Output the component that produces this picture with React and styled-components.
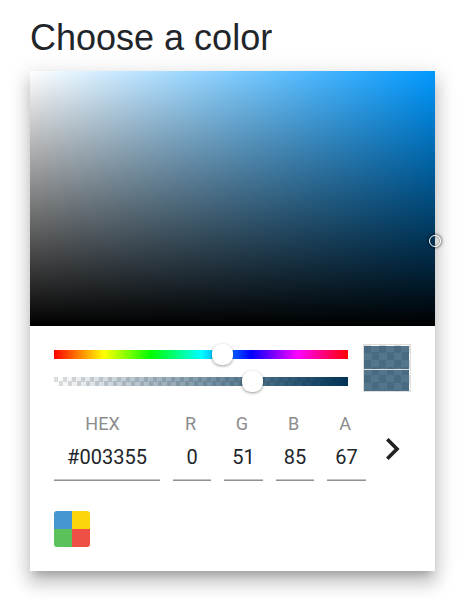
import React, { useState } from "react";
import styled, { createGlobalStyle, css } from "styled-components";

const GlobalStyle = createGlobalStyle`
  * { box-sizing: border-box; }
  body { margin: 0; background: #fff; color: #212529; overflow-x: hidden; }
  button, input { font: inherit; color: inherit; margin: 0; padding: 0; border: 0; border-radius: 0; background: none; }
`;

const Page = styled.main`
  padding: 16px 33px 32px 30px;
  font-family: Roboto, "Liberation Sans", sans-serif;
`;

const Title = styled.h1`
  margin: 0 0 11px;
  font: 400 36px/44px "Liberation Sans", Arial, sans-serif;
`;

const Card = styled.section`
  background: #fff;
  box-shadow:
    0 8px 8px -5px rgba(0, 0, 0, 0.2),
    0 12px 15px 2px rgba(0, 0, 0, 0.14),
    0 5px 21px 3px rgba(0, 0, 0, 0.12);
`;

const Saturation = styled.div`
  position: relative;
  height: 255px;
  background:
    linear-gradient(to top, #000, transparent),
    linear-gradient(to right, #fff, rgba(255, 255, 255, 0)),
    #0099ff;
`;

const Pointer = styled.span`
  position: absolute;
  width: 12px;
  height: 12px;
  border: 1px solid #fff;
  border-radius: 50%;
  transform: translate(-50%, -50%);
  box-shadow: 0 0 3px 1px rgba(0, 0, 0, 0.5), inset 0 0 1px 1px rgba(0, 0, 0, 0.3);
`;

const Controls = styled.div`
  padding: 18px 24px 24px;
`;

const SliderRow = styled.div`
  display: flex;
  align-items: flex-start;
  gap: 15px;
`;

const Sliders = styled.div`
  flex: 1;
  display: grid;
  gap: 18px;
  padding-top: 6px;
`;

const checker = (tile) => css`
  repeating-conic-gradient(#fff 0 25%, #dedede 0 50%) 0 0 / ${tile}px ${tile}px
`;

const Track = styled.div`
  display: flex;
  height: 9px;
  background: ${(p) =>
    p.$kind === "hue"
      ? "linear-gradient(to right, #f00 0%, #ff0 17%, #0f0 33%, #0ff 50%, #00f 67%, #f0f 83%, #f00 100%)"
      : css`linear-gradient(to right, rgba(0, 51, 85, 0), #003355), ${checker(9)}`};
`;

const thumb = css`
  width: 21px;
  height: 21px;
  border: 0;
  border-radius: 9px;
  background: #fff;
  box-shadow: 0 1px 3px rgba(0, 0, 0, 0.4);
`;

const Range = styled.input`
  flex: 1;
  min-width: 0;
  height: 9px;
  margin: 0 -10px;
  appearance: none;
  cursor: pointer;
  &::-webkit-slider-thumb { appearance: none; ${thumb} }
  &::-moz-range-thumb { ${thumb} }
`;

const Swatch = styled.div`
  display: grid;
  grid-template-rows: 23px 1fr;
  gap: 1px;
  width: 48px;
  height: 48px;
  padding: 1px 1px 0 0;
  border: 1px solid #dedede;
  background:
    linear-gradient(#dedede, #dedede) 0 24px / 100% 1px no-repeat,
    ${checker(15)};
`;

const SwatchHalf = styled.span`
  background: rgba(0, 51, 85, 0.67);
`;

const Fields = styled.div`
  display: grid;
  grid-template-columns: 106fr 38fr 39fr 38fr 39fr 32px;
  column-gap: 13px;
  margin-top: 20px;
`;

const Field = styled.label`
  display: grid;
  min-width: 0;
  text-align: center;
`;

const FieldName = styled.span`
  padding-right: ${(p) => (p.$wide ? 9 : 3)}px;
  font-size: 18px;
  line-height: 24px;
  color: #8c8c8c;
`;

const FieldInput = styled.input`
  width: 100%;
  height: 45px;
  padding-bottom: 2px;
  text-align: center;
  font-size: 20px;
  border-bottom: 1px solid #919191;
  box-shadow: inset 0 -1px #c4c4c4;
  outline: none;
`;

const NextButton = styled.button`
  display: flex;
  align-items: center;
  justify-content: center;
  padding: 5px 5px 0 0;
  cursor: pointer;
`;

const PresetButton = styled.button`
  display: block;
  width: 36px;
  height: 36px;
  margin-top: 30px;
  border-radius: 3px;
  overflow: hidden;
  cursor: pointer;
`;

const CHANNELS = [
  ["HEX", "#003355"],
  ["R", "0"],
  ["G", "51"],
  ["B", "85"],
  ["A", "67"],
];

function Chevron() {
  return (
    <svg width="14" height="22" viewBox="0 0 14 22" aria-hidden="true">
      <path d="M1.3 1.3 11 11 1.3 20.7" fill="none" stroke="#212121" strokeWidth="3.6" />
    </svg>
  );
}

function Tiles() {
  return (
    <svg width="36" height="36" viewBox="0 0 36 36" display="block" aria-hidden="true">
      <path fill="#4596d1" d="M0 0h18v18H0z" />
      <path fill="#fcd50a" d="M18 0h18v18H18z" />
      <path fill="#5bc15b" d="M0 18h18v18H0z" />
      <path fill="#ee5045" d="M18 18h18v18H18z" />
    </svg>
  );
}

export default function App() {
  const [hue, setHue] = useState(206);
  const [alpha, setAlpha] = useState(67.5);
  const [values, setValues] = useState(Object.fromEntries(CHANNELS));

  return (
    <Page>
      <GlobalStyle />
      <Title>Choose a color</Title>
      <Card>
        <Saturation>
          <Pointer style={{ left: "100%", top: "66.7%" }} />
        </Saturation>
        <Controls>
          <SliderRow>
            <Sliders>
              <Track $kind="hue">
                <Range type="range" aria-label="Hue" min="0" max="360" step="any"
                  value={hue} onChange={(e) => setHue(Number(e.target.value))} />
              </Track>
              <Track $kind="alpha">
                <Range type="range" aria-label="Alpha" min="0" max="100" step="any"
                  value={alpha} onChange={(e) => setAlpha(Number(e.target.value))} />
              </Track>
            </Sliders>
            <Swatch>
              <SwatchHalf />
              <SwatchHalf />
            </Swatch>
          </SliderRow>
          <Fields>
            {CHANNELS.map(([name]) => (
              <Field key={name}>
                <FieldName $wide={name === "HEX"}>{name}</FieldName>
                <FieldInput value={values[name]}
                  onChange={(e) => setValues({ ...values, [name]: e.target.value })} />
              </Field>
            ))}
            <NextButton type="button" aria-label="Next format">
              <Chevron />
            </NextButton>
          </Fields>
          <PresetButton type="button" aria-label="Color presets">
            <Tiles />
          </PresetButton>
        </Controls>
      </Card>
    </Page>
  );
}
